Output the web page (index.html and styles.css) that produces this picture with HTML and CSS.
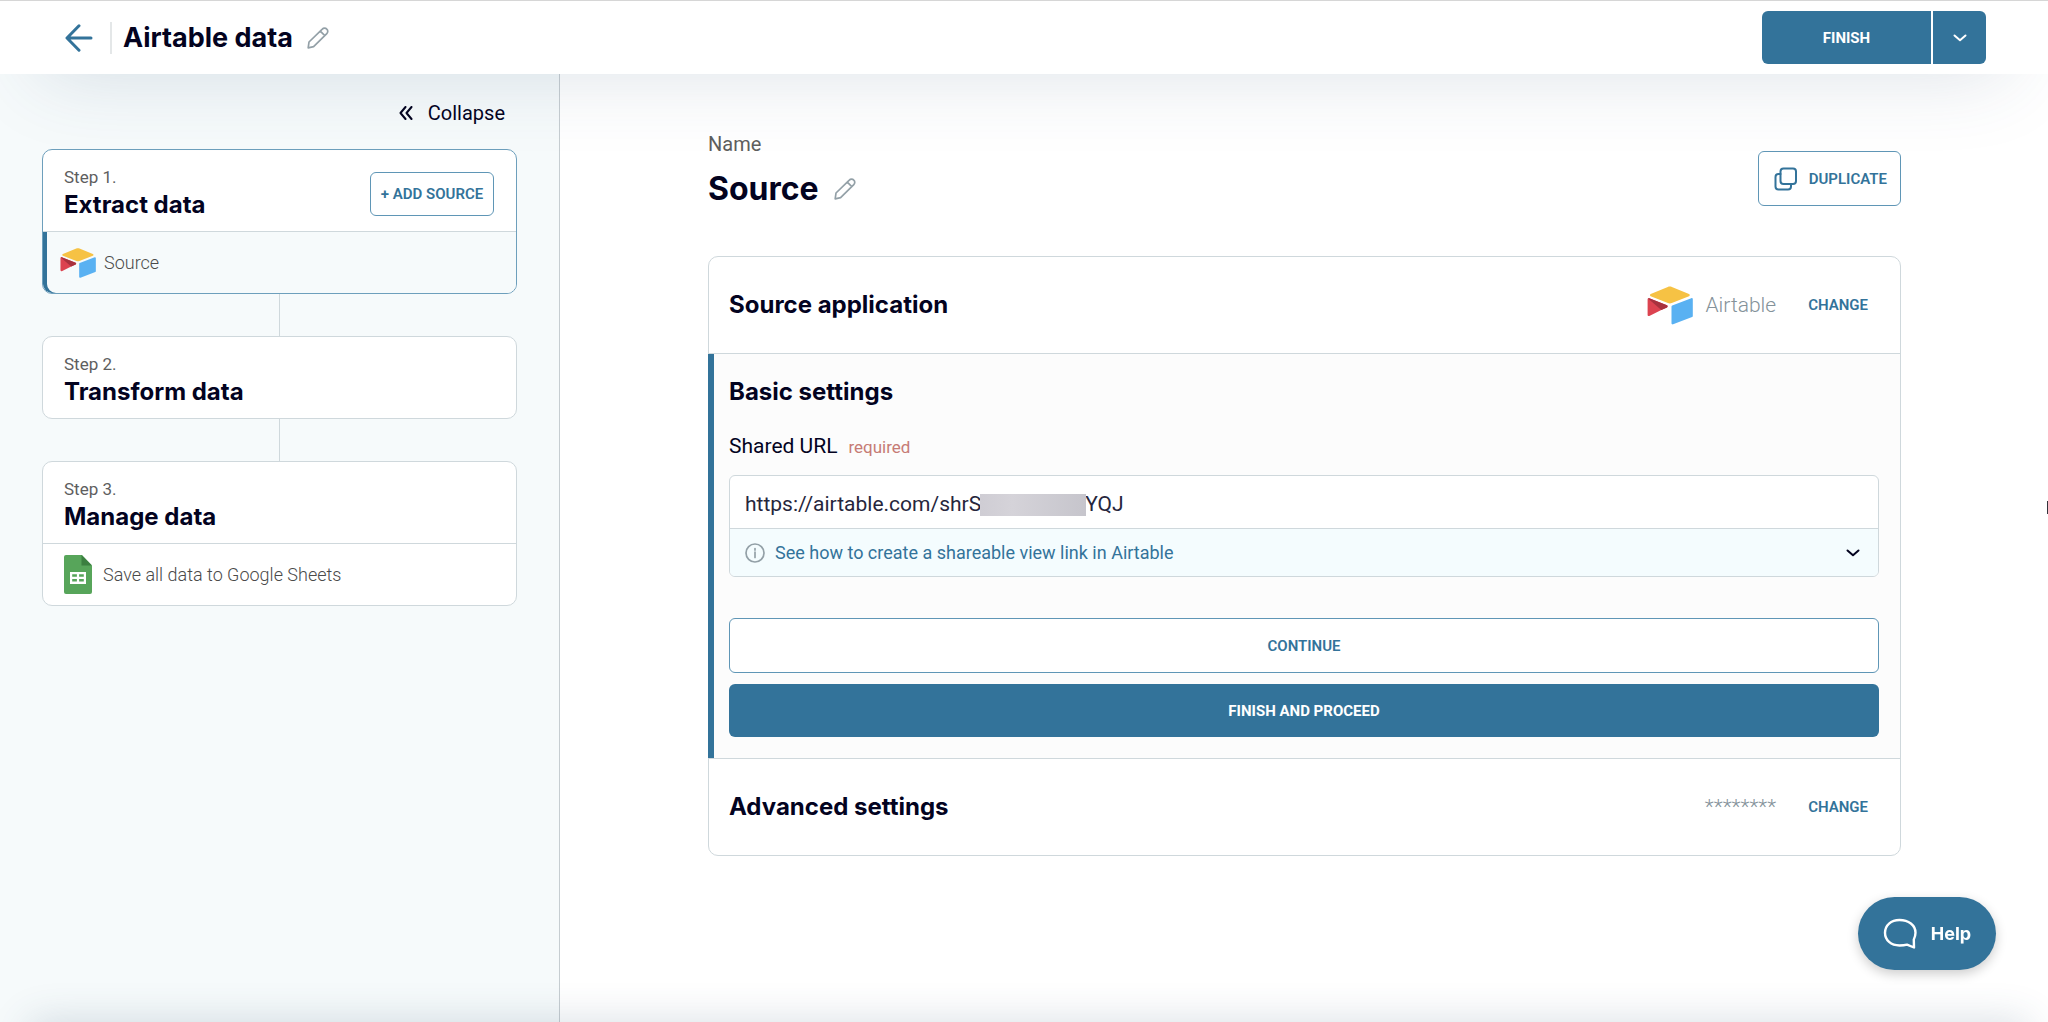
FILE: index.html
```html
<!DOCTYPE html>
<html lang="en">
<head>
<meta charset="utf-8">
<meta name="viewport" content="width=device-width, initial-scale=1">
<title>Airtable data</title>
<link rel="stylesheet" href="styles.css">
</head>
<body>
<svg class="defs" aria-hidden="true">
  <symbol id="pencil" viewBox="0 0 22 22">
    <path d="M1.2 20.8 2 15 15.3 2.1a3.1 3.1 0 0 1 4.5 0 3.1 3.1 0 0 1 0 4.500L6.600 19.700ZM13.300 4.100l4.500 4.500" />
  </symbol>
  <symbol id="airtable" viewBox="0 0 46 38">
    <path fill="#f6c244" d="M20.800.500 3.700 7.600c-1 .4-1 1.700 0 2.100l17.200 6.800c1.300.5 2.600.5 3.900 0l17.200-6.800c1-.4 1-1.700 0-2.100L24.900.500c-1.300-.6-2.800-.6-4.100 0Z"/>
    <path fill="#59b1f2" d="M24.500 20v16.800c0 .8.800 1.400 1.600 1l19-7.300c.4-.2.700-.6.700-1.100V12.700c0-.8-.8-1.300-1.500-1l-19.100 7.200c-.4.200-.7.600-.7 1.100Z"/>
    <path fill="#dc4350" d="m20 20.900-5.700 2.700L2.300 29.400c-.8.400-1.700-.2-1.700-1V12.700c0-.3.100-.6.400-.8.300-.3.900-.3 1.300-.1l17.700 7c.8.400.9 1.600 0 2.100Z"/>
    <path fill="#a8323e" d="m20 20.900-5.700 2.700L1 11.900c.3-.3.900-.3 1.300-.1l17.700 7c.8.400.9 1.600 0 2.100Z"/>
  </symbol>
  <symbol id="chevron" viewBox="0 0 14 8">
    <path d="m1.500 1.500 5.500 4.800 5.500-4.800"/>
  </symbol>
</svg>

<header class="topbar">
  <div class="topbar-title">
    <a class="back" href="#" aria-label="Back">
      <svg class="stroke" width="28" height="28" viewBox="0 0 28 28"><path d="M26 14H2.500M14 1.800 2 14l12 12.200"/></svg>
    </a>
    <h1>Airtable data</h1>
    <button class="icon-button" aria-label="Rename importer"><svg class="pencil" width="22" height="22"><use href="#pencil"/></svg></button>
  </div>
  <div class="split">
    <button class="split-main">FINISH</button>
    <button class="split-more" aria-label="More options"><svg class="chevron" width="14" height="8"><use href="#chevron"/></svg></button>
  </div>
</header>

<div class="layout">
  <aside class="sidebar">
    <button class="collapse">
      <svg class="chevron" width="14" height="14" viewBox="0 0 14 14"><path d="M6.500 1 1.500 7l5 6M12.500 1l-5 6 5 6"/></svg>
      Collapse
    </button>
    <section class="step step-active">
      <div class="step-head">
        <div><p>Step 1.</p><h2>Extract data</h2></div>
        <button class="outline add">+ ADD SOURCE</button>
      </div>
      <a class="step-item current" href="#"><svg width="36" height="30"><use href="#airtable"/></svg>Source</a>
    </section>
    <section class="step">
      <div class="step-head"><div><p>Step 2.</p><h2>Transform data</h2></div></div>
    </section>
    <section class="step">
      <div class="step-head"><div><p>Step 3.</p><h2>Manage data</h2></div></div>
      <a class="step-item sheets" href="#">
        <svg width="28" height="39" viewBox="0 0 28 39">
          <path fill="#57a55a" d="M2 0h16l10 10.500V37a2 2 0 0 1-2 2H2a2 2 0 0 1-2-2V2a2 2 0 0 1 2-2Z"/>
          <path fill="#3b7f40" d="M17.500 0 28 10.500H17.500Z"/>
          <path fill="#fff" fill-rule="evenodd" d="M6 17h16v12H6ZM8.200 19.200v2.500h4.700v-2.500Zm6.900 0v2.500h4.700v-2.500Zm-6.900 4.700v2.600h4.700v-2.600Zm6.900 0v2.600h4.700v-2.600Z"/>
        </svg>Save all data to Google Sheets</a>
    </section>
  </aside>

  <main class="content">
    <div class="source-head">
      <div>
        <p class="eyebrow">Name</p>
        <div class="source-name">
          <h2>Source</h2>
          <button class="icon-button" aria-label="Rename source"><svg class="pencil" width="22" height="22"><use href="#pencil"/></svg></button>
        </div>
      </div>
      <button class="outline duplicate">
        <svg class="stroke thin" width="24" height="24" viewBox="0 0 24 24"><rect x="6.500" y="1.500" width="15.500" height="15.500" rx="3"/><path d="M6.500 7H4.500a3 3 0 0 0-3 3v9.500a3 3 0 0 0 3 3H14a3 3 0 0 0 3-3V17"/></svg>
        DUPLICATE
      </button>
    </div>

    <div class="panel">
      <section class="panel-row">
        <h3>Source application</h3>
        <svg width="46" height="39"><use href="#airtable"/></svg>
        <span class="app">Airtable</span>
        <button class="link">CHANGE</button>
      </section>
      <form class="basic">
        <h3>Basic settings</h3>
        <div class="label-row"><label for="url">Shared URL</label><span>required</span></div>
        <div class="field">
          <div class="url">
            <input id="url" type="text" value="https://airtable.com/shrS&nbsp;&nbsp;&nbsp;&nbsp;&nbsp;&nbsp;&nbsp;&nbsp;&nbsp;&nbsp;&nbsp;&nbsp;&nbsp;&nbsp;&nbsp;&nbsp;&nbsp;&nbsp;&nbsp;&nbsp;YQJ">
            <span class="mask"></span>
          </div>
          <button type="button" class="hint">
            <svg class="info" width="20" height="20" viewBox="0 0 20 20"><circle cx="10" cy="10" r="9"/><path d="M10 9v5.500M10 5.500v1.600"/></svg>
            <span>See how to create a shareable view link in Airtable</span>
            <svg class="chevron" width="14" height="8"><use href="#chevron"/></svg>
          </button>
        </div>
        <button type="button" class="outline wide">CONTINUE</button>
        <button type="button" class="primary">FINISH AND PROCEED</button>
      </form>
      <section class="panel-row">
        <h3>Advanced settings</h3>
        <span class="app">********</span>
        <button class="link">CHANGE</button>
      </section>
    </div>
  </main>
</div>

<div class="bottom-shade"></div>
<div class="edge-mark"></div>
<button class="help">
  <svg width="34" height="32" viewBox="0 0 34 32"><path d="M16.500 2C8 2 2 7.200 2 14.800c0 7.500 6 12.700 14.500 12.700 2.800 0 5.300-.2 7.500-.8l7 2.800-.2-8c1-2 1.700-4.200 1.700-6.700C32.500 7.200 25.500 2 16.500 2Z"/></svg>
  Help
</button>
</body>
</html>
```
FILE: styles.css
```css
:root {
  --blue: #33739a;
  --ink: #03031f;
  --gray: #5e5e5e;
  --muted: #93a0a7;
  --line: #cfd8dc;
  --body: Roboto, "Liberation Sans", sans-serif;
  --head: Inter, "Liberation Sans", sans-serif;
}

* { box-sizing: border-box; }

body {
  margin: 0;
  min-height: 100vh;
  display: flex;
  flex-direction: column;
  background: #fff;
  color: var(--ink);
  font: 18px/24px var(--body);
}

h1, h2, h3, p { margin: 0; }
h1, h2, h3 { font-family: var(--head); font-weight: 700; }
svg { display: block; flex: none; }
button, input { font: inherit; color: inherit; }
button { padding: 0; border: 0; background: none; }
a { color: inherit; text-decoration: none; }

.defs { position: absolute; width: 0; height: 0; }
.stroke, .pencil, .chevron, .info, .help svg {
  fill: none;
  stroke: currentColor;
  stroke-linecap: round;
  stroke-linejoin: round;
}
.stroke { stroke-width: 3; }
.thin, .chevron { stroke-width: 2; }
.pencil, .info { stroke-width: 1.7; color: var(--muted); }

/* Top bar */
.topbar {
  position: relative;
  z-index: 1;
  display: flex;
  justify-content: space-between;
  align-items: center;
  height: 74px;
  padding: 0 62px 0 65px;
  border-top: 1px solid #d6d6d6;
  background: #fff;
}
/* Soft shade that falls below the bar and fades towards both ends */
.topbar::after {
  content: "";
  position: absolute;
  inset: -200px 0 0;
  z-index: -1;
  box-shadow: 0 40px 80px -40px rgba(50, 80, 110, .17);
  clip-path: inset(273px 0 -140px 0);
  pointer-events: none;
}
.topbar-title { display: flex; align-items: center; }
.back { color: var(--blue); padding-right: 17px; border-right: 2px solid #e4e7e8; margin-right: 11px; height: 32px; display: flex; align-items: center; }
.topbar h1 { font-size: 27px; line-height: 32px; margin-right: 14px; }

.split { display: flex; gap: 2px; border-radius: 6px; overflow: hidden; color: #fff; }
.split button { height: 53px; background: var(--blue); display: grid; place-items: center; }
.split-main { width: 169px; font-size: 15px; font-weight: 700; }
.split-more { width: 53px; }

/* Sidebar */
.layout { flex: 1; display: flex; }
.sidebar {
  width: 560px;
  flex: none;
  display: flex;
  flex-direction: column;
  padding: 27px 42px 32px;
  background: #f6fafb;
  border-right: 1px solid #c6cdd1;
}
.collapse { align-self: flex-end; display: flex; align-items: center; gap: 15px; margin: 0 12px 24px 0; font-size: 20px; }
.step {
  position: relative;
  border: 1px solid var(--line);
  border-radius: 10px;
  background: #fff;
}
.step-active { border-color: #6d9fbc; }
.step + .step { margin-top: 42px; }
.step + .step::before {
  content: "";
  position: absolute;
  bottom: 100%;
  left: calc(50% - 1px);
  height: 43px;
  border-left: 1px solid var(--line);
}
.step-head { display: flex; justify-content: space-between; align-items: center; height: 81px; padding: 3px 22px 0 21px; }
.step-head p { font-size: 17px; line-height: 26px; color: var(--gray); }
.step-head h2 { font-size: 24px; line-height: 30px; }
.step-item {
  display: flex;
  align-items: center;
  gap: 8px;
  height: 62px;
  border-top: 1px solid var(--line);
  border-radius: 0 0 9px 9px;
  color: #4a4a4a;
  font-weight: 300;
}
.current { background: #f6fafb; box-shadow: inset 4px 0 var(--blue); padding-left: 17px; }
.sheets { gap: 11px; padding-left: 21px; }

.outline { border: 1px solid #5f96b6; border-radius: 6px; background: #fff; color: var(--blue); font-size: 15px; font-weight: 600; }
.add { width: 124px; height: 44px; margin-top: 3px; }

/* Main column */
.content { flex: 1; min-width: 0; padding: 54px 147px 60px 148px; }
.source-head { display: flex; justify-content: space-between; align-items: flex-start; margin-bottom: 48px; }
.eyebrow { font-size: 20px; line-height: 32px; color: var(--gray); }
.source-name { display: flex; align-items: center; gap: 15px; margin-top: 10px; }
.source-name h2 { font-size: 32px; line-height: 38px; }
.duplicate { display: flex; align-items: center; gap: 11px; height: 55px; margin-top: 23px; padding: 0 13px 0 15px; }

.panel { border: 1px solid var(--line); border-radius: 10px; }
.panel-row { display: flex; align-items: center; height: 96px; padding: 0 32px 0 20px; }
.panel h3 { flex: 1; font-size: 24px; line-height: 30px; }
.app { margin: 0 32px 0 12px; font-size: 21px; font-weight: 300; color: #84929a; }
.link { color: var(--blue); font-size: 15px; font-weight: 600; }

.basic {
  display: flex;
  flex-direction: column;
  margin-left: -1px;
  padding: 23px 21px 21px;
  border: solid var(--line);
  border-width: 1px 0;
  background: #fcfcfc;
  box-shadow: inset 6px 0 var(--blue);
}
.label-row { display: flex; align-items: baseline; gap: 11px; margin: 24px 0 13px; font-size: 21px; line-height: 30px; }
.label-row span { font-size: 17px; color: #c67b75; }
.field { border: 1px solid var(--line); border-radius: 6px; overflow: hidden; margin-bottom: 41px; background: #fff; }
.url { position: relative; }
.url input { display: block; width: 100%; height: 52px; padding: 3px 15px 0; border: 0; outline: 0; background: none; font-size: 21px; color: #26263c; }
.mask { position: absolute; left: 250px; top: 18px; width: 106px; height: 22px; background: linear-gradient(90deg, #cfcdd4, #d5d3d9 30%, #c6c5cc); }
.hint {
  display: flex;
  align-items: center;
  gap: 10px;
  width: 100%;
  height: 48px;
  padding: 0 18px 0 15px;
  border-top: 1px solid var(--line);
  background: #f4fcfe;
  text-align: left;
}
.hint span { flex: 1; color: var(--blue); }
.wide { height: 55px; }
.primary { height: 53px; margin-top: 11px; border-radius: 6px; background: var(--blue); color: #fff; font-size: 15px; font-weight: 700; }

/* Overlays */
.bottom-shade {
  position: fixed;
  top: 100%;
  left: 30px;
  right: 20px;
  height: 40px;
  box-shadow: 0 0 40px rgba(50, 80, 110, .2);
}
.edge-mark { position: fixed; right: 0; top: 501px; width: 1px; height: 13px; background: #33333c; }
.help {
  position: fixed;
  right: 52px;
  bottom: 52px;
  display: flex;
  align-items: center;
  justify-content: center;
  gap: 14px;
  width: 138px;
  height: 73px;
  border-radius: 37px;
  background: var(--blue);
  color: #fff;
  font: 700 18px/24px var(--head);
  box-shadow: 0 4px 12px rgba(0, 0, 0, .2);
}
.help svg { stroke-width: 2.4; }
```
